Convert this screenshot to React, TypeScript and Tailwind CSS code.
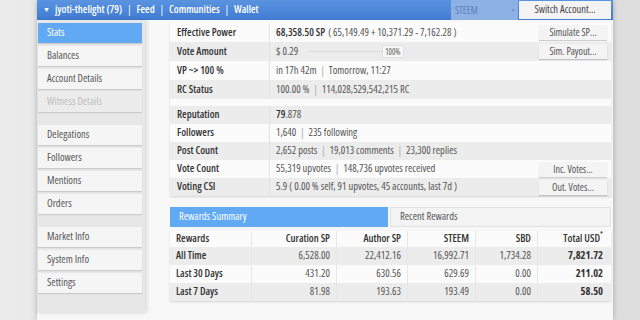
import React from "react";

const font = { fontFamily: '"Open Sans", "Noto Sans", sans-serif' };

function SideItem({ label, active, disabled }: { label: string; active?: boolean; disabled?: boolean }) {
  return (
    <div
      className={
        "h-[20px] flex items-center pl-[9px] text-[10.5px] shadow-[0_1px_1px_rgba(0,0,0,0.12)] " +
        (active
          ? "bg-[#62a9f4] text-white"
          : disabled
          ? "bg-[#ececec] text-[#bdbdbd]"
          : "bg-[#f5f5f5] text-[#555]")
      }
    >
      {label}
    </div>
  );
}

function Btn({ label }: { label: string }) {
  return (
    <div className="w-[68px] h-[15px] bg-[#f4f4f4] shadow-[0_1px_1px_rgba(0,0,0,0.18)] flex items-center justify-center text-[10px] text-[#555]">
      {label}
    </div>
  );
}

function Row({
  label,
  children,
  gray,
  h,
  btn,
}: {
  label: string;
  children: React.ReactNode;
  gray?: boolean;
  h: string;
  btn?: string;
}) {
  return (
    <div className={"flex items-center " + h + " " + (gray ? "bg-[#ececec]" : "bg-[#fbfbfb]")}>
      <div className="w-[100px] pl-[7px] font-semibold text-[#333] h-full flex items-center border-r border-[#e2e2e2]">
        {label}
      </div>
      <div className="flex-1 pl-[6px] text-[#555] flex items-center whitespace-nowrap">{children}</div>
      {btn && (
        <div className="pr-[4px]">
          <Btn label={btn} />
        </div>
      )}
    </div>
  );
}

const Sep = () => <span className="text-[#aaa] mx-[4px]">|</span>;

const cols = ["w-[82px]", "w-[85px]", "w-[71px]", "w-[68px]", "w-[62px]", "w-[71px]"];

function RRow({ cells, gray, header }: { cells: string[]; gray?: boolean; header?: boolean }) {
  return (
    <div className={"flex " + (header ? "h-[16px] bg-[#fbfbfb]" : "h-[18px] " + (gray ? "bg-[#ececec]" : "bg-[#fbfbfb]"))}>
      {cells.map((c, i) => (
        <div
          key={i}
          className={
            cols[i] +
            " flex items-center " +
            (i === 0 ? "pl-[6px] font-semibold text-[#333]" : "justify-end pr-[6px]") +
            (i < 5 ? " border-r border-[#e6e6e6]" : "") +
            (header && i > 0 ? " font-semibold text-[#333]" : "") +
            (!header && i === 5 ? " font-bold text-[#333]" : "") +
            (!header && i > 0 && i < 5 ? " text-[#555]" : "")
          }
        >
          {c}
          {header && i === 5 ? <sup className="text-[7px] -mt-[4px]">*</sup> : null}
        </div>
      ))}
    </div>
  );
}

export default function App() {
  return (
    <div
      style={font}
      className="font-stretch-condensed w-[640px] h-[320px] overflow-hidden bg-gradient-to-r from-[#ebebeb] to-[#dddddd] pl-[37px]"
    >
      <div className="w-[576px] h-[320px] bg-[#f8f8f8] shadow-[0_0_6px_rgba(0,0,0,0.25)] flex flex-col">
        {/* top bar */}
        <div className="h-[20px] bg-gradient-to-b from-[#5a94e0] to-[#3f7bd1] flex items-center text-white text-[10.5px] font-semibold">
          <span className="ml-[6px] mr-[5px] text-[7px]">▼</span>
          <span>jyoti-thelight (79)</span>
          <span className="mx-[5px] font-normal">|</span>
          <span>Feed</span>
          <span className="mx-[5px] font-normal">|</span>
          <span>Communities</span>
          <span className="mx-[5px] font-normal">|</span>
          <span>Wallet</span>
          <div className="flex-1" />
          <div className="w-[67px] h-[20px] bg-[#8db1e5] text-[#5c80b8] text-[10px] font-normal flex items-center justify-between px-[4px]">
            <span>STEEM</span>
            <span className="text-[6px]">▪</span>
          </div>
          <div className="ml-[1px] mr-[2px] w-[92px] h-[18px] bg-[#f3f3f3] text-[#444] text-[10.5px] font-normal flex items-center justify-center">
            Switch Account...
          </div>
        </div>
        {/* body */}
        <div className="flex flex-1">
          <div className="w-[108px] h-[293px] bg-[#e7e7e7] shadow-[2px_0_4px_rgba(0,0,0,0.12)] pl-[1px] pr-[3px] pt-[3px] flex flex-col gap-[3px]">
            <SideItem label="Stats" active />
            <SideItem label="Balances" />
            <SideItem label="Account Details" />
            <SideItem label="Witness Details" disabled />
            <div className="h-[7px]" />
            <SideItem label="Delegations" />
            <SideItem label="Followers" />
            <SideItem label="Mentions" />
            <SideItem label="Orders" />
            <div className="h-[7px]" />
            <SideItem label="Market Info" />
            <SideItem label="System Info" />
            <SideItem label="Settings" />
          </div>
          <div className="ml-[25px] w-[441px] pt-[3px] text-[10.5px] flex flex-col">
            <div className="shadow-[0_1px_2px_rgba(0,0,0,0.15)]">
              <Row label="Effective Power" h="h-[19px]" btn="Simulate SP...">
                <span className="font-semibold text-[#333]">68,358.50 SP</span>
                <span className="ml-[3px]">( 65,149.49 + 10,371.29 - 7,162.28 )</span>
              </Row>
              <Row label="Vote Amount" h="h-[19px]" gray btn="Sim. Payout...">
                <span>$ 0.29</span>
                <span className="ml-[11px] w-[73px] border-t border-dotted border-[#c8c8c8]" />
                <span className="h-[13px] px-[2px] bg-[#f8f8f8] border border-[#e0e0e0] text-[8px] flex items-center">100%</span>
              </Row>
              <Row label="VP ~> 100 %" h="h-[19px]">
                in 17h 42m
                <Sep />
                Tomorrow, 11:27
              </Row>
              <Row label="RC Status" h="h-[19px]" gray>
                100.00 %
                <Sep />
                114,028,529,542,215 RC
              </Row>
              <div className="h-[7px] bg-[#fbfbfb]" />
              <Row label="Reputation" h="h-[18px]" gray>
                <span className="font-semibold text-[#333]">79</span>.878
              </Row>
              <Row label="Followers" h="h-[18px]">
                1,640
                <Sep />
                235 following
              </Row>
              <Row label="Post Count" h="h-[18px]" gray>
                2,652 posts
                <Sep />
                19,013 comments
                <Sep />
                23,300 replies
              </Row>
              <Row label="Vote Count" h="h-[18px]" btn="Inc. Votes...">
                55,319 upvotes
                <Sep />
                148,736 upvotes received
              </Row>
              <Row label="Voting CSI" h="h-[18px]" gray btn="Out. Votes...">
                5.9 ( 0.00 % self, 91 upvotes, 45 accounts, last 7d )
              </Row>
            </div>
            <div className="mt-[11px] flex gap-[2px] h-[20px]">
              <div className="w-[218px] bg-[#62a9f4] text-white text-[10.5px] flex items-center pl-[9px]">
                Rewards Summary
              </div>
              <div className="flex-1 bg-[#f3f3f3] border border-[#e2e2e2] text-[#555] text-[10.5px] flex items-center pl-[9px]">
                Recent Rewards
              </div>
            </div>
            <div className="mt-[4px] shadow-[0_1px_2px_rgba(0,0,0,0.15)]">
              <RRow header cells={["Rewards", "Curation SP", "Author SP", "STEEM", "SBD", "Total USD"]} />
              <RRow gray cells={["All Time", "6,528.00", "22,412.16", "16,992.71", "1,734.28", "7,821.72"]} />
              <RRow cells={["Last 30 Days", "431.20", "630.56", "629.69", "0.00", "211.02"]} />
              <RRow gray cells={["Last 7 Days", "81.98", "193.63", "193.49", "0.00", "58.50"]} />
            </div>
          </div>
        </div>
      </div>
    </div>
  );
}
